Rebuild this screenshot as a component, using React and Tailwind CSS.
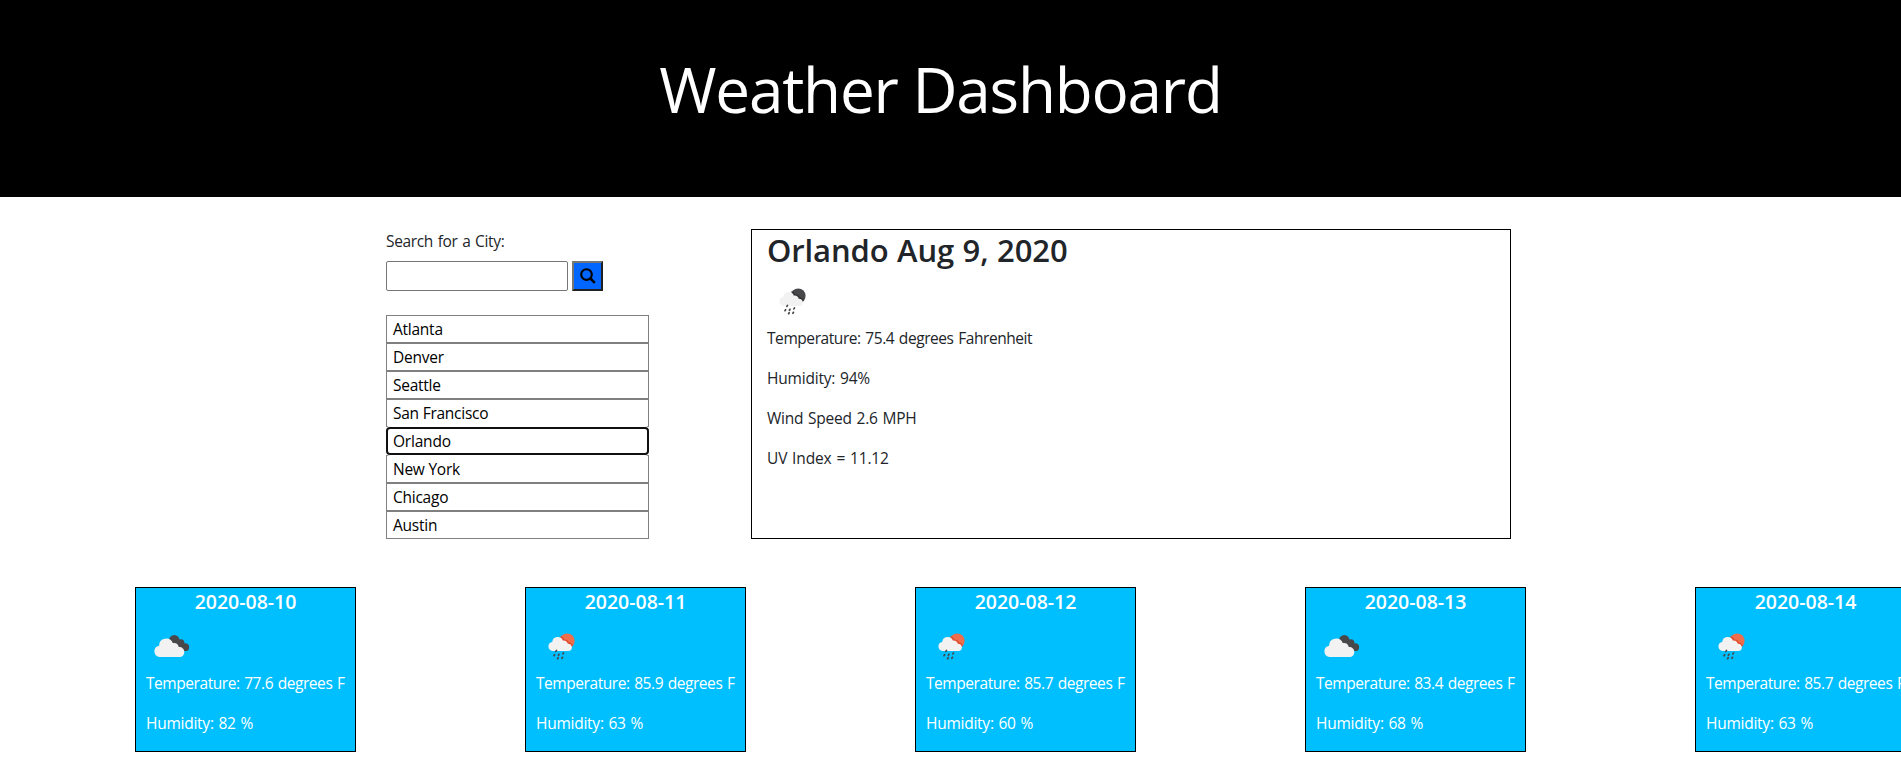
import React from "react";

const cities = ["Atlanta", "Denver", "Seattle", "San Francisco", "Orlando", "New York", "Chicago", "Austin"];

const forecast = [
  { date: "2020-08-10", icon: "clouds", temp: "77.6", humidity: 82 },
  { date: "2020-08-11", icon: "rain", temp: "85.9", humidity: 63 },
  { date: "2020-08-12", icon: "rain", temp: "85.7", humidity: 60 },
  { date: "2020-08-13", icon: "clouds", temp: "83.4", humidity: 68 },
  { date: "2020-08-14", icon: "rain", temp: "85.7", humidity: 63 },
];

function SearchIcon() {
  return (
    <svg width="16" height="16" viewBox="0 0 16 16" className="shrink-0" fill="none" stroke="#000">
      <circle cx="6.5" cy="6.6" r="5.3" strokeWidth="2.1" />
      <path d="M10.4 10.5l4.4 4.3" strokeWidth="2.5" />
    </svg>
  );
}

function RainIcon({ disc, shade }) {
  const drops = [[20.2, 29.9], [18.3, 34.2], [22.7, 33.8], [27.2, 32.4], [21.9, 37.2], [26.2, 36.8]];
  return (
    <svg width="50" height="50" viewBox="0 0 50 50" className="block">
      <circle cx="31.2" cy="19.8" r="7.4" fill={disc} />
      <path
        d="M24.5 15.6c1.9.8 3 2.2 3.3 3.7 2-.3 3.8.8 4.3 2.6 2.2.2 3.7 1.4 4.2 3.3"
        fill="none"
        stroke={shade}
        strokeWidth="1.4"
      />
      <path
        d="M16.6 30a4.6 4.6 0 0 1-.4-9.1 5.5 5.5 0 0 1 10.7-1.2c2.4-.5 4.4.9 4.8 3.1 2.5 0 4.2 1.5 4.2 3.6 0 2.2-1.6 3.6-3.7 3.6z"
        fill="#f2f2f2"
      />
      {drops.map(([x, y], i) => (
        <path key={i} d={`M${x + 0.3} ${y - 0.5}l-.6 1`} stroke="#48484a" strokeWidth="1.7" strokeLinecap="round" />
      ))}
    </svg>
  );
}

function CloudsIcon() {
  return (
    <svg width="50" height="50" viewBox="0 0 50 50" className="block">
      <g fill="#48484a">
        <circle cx="28.3" cy="19.3" r="5.2" />
        <circle cx="34.8" cy="21.8" r="3.6" />
        <circle cx="39.2" cy="26.2" r="3.9" />
        <path d="M25 20h10l5 10h-8z" />
      </g>
      <path
        d="M13.7 36a5.7 5.7 0 0 1-.6-11.300 7.100 7.100 0 0 1 13.700-2.700c3.100-.6 5.500 1.100 6 4 3.200-.1 5.500 2 5.500 4.900 0 3-2.100 5.100-4.900 5.100z"
        fill="#f2f2f2"
      />
    </svg>
  );
}

function City({ name, active }) {
  return (
    <button
      className={
        active
          ? "relative z-10 block h-7 w-full rounded-[4px] border-2 border-[#101010] bg-white pl-[5px] text-left leading-[25px] tracking-[-0.2px] text-black shadow-[0_0_0_1px_#fff]"
          : "block h-7 w-full border border-[#808080] bg-white pl-1.5 text-left leading-[27px] tracking-[-0.25px] text-black"
      }
    >
      {name}
    </button>
  );
}

function DayCard({ day }) {
  return (
    <article className="h-[165px] w-[221px] shrink-0 border border-black bg-[#00bfff] px-2.5 pt-[2px] text-white">
      <h5 className="mb-[7px] text-center text-[19.5px] leading-6 font-semibold">{day.date}</h5>
      {day.icon === "rain" ? <RainIcon disc="#ec6e4c" shade="#e0492b" /> : <CloudsIcon />}
      <p className="mb-4 whitespace-nowrap tracking-[-0.44px] [word-spacing:1px]">Temperature: {day.temp} degrees F</p>
      <p className="tracking-[-0.25px] [word-spacing:1px]">Humidity: {day.humidity} %</p>
    </article>
  );
}

export default function App() {
  return (
    <div className="h-[772px] w-full overflow-hidden bg-white font-['Open_Sans','Noto_Sans',sans-serif] text-[15.5px] leading-6 text-[#212529]">
      <header className="flex h-[197px] justify-center bg-black pt-[51px] pr-5">
        <h1 className="text-[62px] leading-[77px] tracking-[-1.2px] text-white">Weather Dashboard</h1>
      </header>

      <main className="flex pt-8 pl-[386px]">
        <section className="w-[263px] shrink-0">
          <label htmlFor="city" className="mb-2 block tracking-[-0.35px] [word-spacing:1px]">Search for a City:</label>
          <div className="mb-6 flex h-[30px] gap-1">
            <input id="city" className="h-[30px] w-[182px] rounded-[2px] border border-[#767676] bg-white px-1 outline-none" />
            <button
              aria-label="Search"
              className="flex h-[30px] w-[31px] items-center border-2 border-t-[#767676] border-r-[#212121] border-b-[#212121] border-l-[#767676] bg-[#0066ff] pl-1.5"
            >
              <SearchIcon />
            </button>
          </div>
          <div>
            {cities.map((name) => (
              <City key={name} name={name} active={name === "Orlando"} />
            ))}
          </div>
        </section>

        <section className="ml-[102px] h-[310px] w-[760px] shrink-0 border border-black pl-[15px]">
          <h2 className="mb-[7px] pt-px text-[31px] leading-[38px] font-semibold tracking-[-0.1px] [word-spacing:0.5px]">Orlando Aug 9, 2020</h2>
          <RainIcon disc="#48484a" shade="#303032" />
          <p className="mb-4 tracking-[-0.43px] [word-spacing:1px]">Temperature: 75.4 degrees Fahrenheit</p>
          <p className="mb-4 tracking-[-0.2px] [word-spacing:1px]">Humidity: 94%</p>
          <p className="mb-4 tracking-[-0.23px] [word-spacing:1px]">Wind Speed 2.6 MPH</p>
          <p className="tracking-[-0.15px] [word-spacing:1px]">UV Index = 11.12</p>
        </section>
      </main>

      <section className="mt-12 flex gap-[169px] pl-[135px]">
        {forecast.map((day) => (
          <DayCard key={day.date} day={day} />
        ))}
      </section>
    </div>
  );
}
